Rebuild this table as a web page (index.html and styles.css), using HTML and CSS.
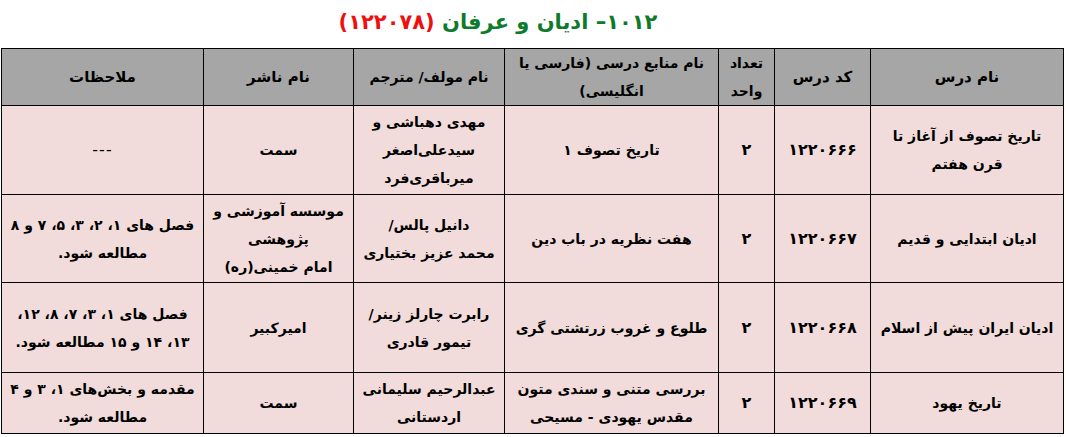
FILE: index.html
```html
<!DOCTYPE html>
<html lang="fa" dir="rtl">
<head>
<meta charset="utf-8">
<link rel="stylesheet" href="styles.css">
</head>
<body>
<h1 class="title"><span class="green">۱۰۱۲– ادیان و عرفان</span> <span class="red">(۱۲۲۰۷۸)</span></h1>
<table class="grid">
  <colgroup>
    <col class="c-name"><col class="c-code"><col class="c-unit"><col class="c-src"><col class="c-auth"><col class="c-pub"><col class="c-note">
  </colgroup>
  <thead>
    <tr>
      <th class="big">نام درس</th>
      <th class="big">کد درس</th>
      <th>تعداد<br>واحد</th>
      <th>نام منابع درسی (فارسی یا<br>انگلیسی)</th>
      <th>نام مولف/ مترجم</th>
      <th class="big">نام ناشر</th>
      <th class="big">ملاحظات</th>
    </tr>
  </thead>
  <tbody>
    <tr class="r1">
      <td>تاریخ تصوف از آغاز تا<br>قرن هفتم</td>
      <td class="num">۱۲۲۰۶۶۶</td>
      <td class="num">۲</td>
      <td>تاریخ تصوف ۱</td>
      <td>مهدی دهباشی و<br>سیدعلی‌اصغر<br>میرباقری‌فرد</td>
      <td>سمت</td>
      <td class="dash">---</td>
    </tr>
    <tr class="r2">
      <td>ادیان ابتدایی و قدیم</td>
      <td class="num">۱۲۲۰۶۶۷</td>
      <td class="num">۲</td>
      <td>هفت نظریه در باب دین</td>
      <td>دانیل پالس/<br>محمد عزیز بختیاری</td>
      <td>موسسه آموزشی و<br>پژوهشی<br>امام خمینی(ره)</td>
      <td>فصل های ۱، ۲، ۳، ۵، ۷ و ۸<br>مطالعه شود.</td>
    </tr>
    <tr class="r3">
      <td>ادیان ایران پیش از اسلام</td>
      <td class="num">۱۲۲۰۶۶۸</td>
      <td class="num">۲</td>
      <td>طلوع و غروب زرتشتی گری</td>
      <td>رابرت چارلز زینر/<br>تیمور قادری</td>
      <td>امیرکبیر</td>
      <td>فصل های ۱، ۳، ۷، ۸، ۱۲،<br>۱۳، ۱۴ و ۱۵ مطالعه شود.</td>
    </tr>
    <tr class="r4">
      <td>تاریخ یهود</td>
      <td class="num">۱۲۲۰۶۶۹</td>
      <td class="num">۲</td>
      <td>بررسی متنی و سندی متون<br>مقدس یهودی - مسیحی</td>
      <td>عبدالرحیم سلیمانی<br>اردستانی</td>
      <td>سمت</td>
      <td>مقدمه و بخش‌های ۱، ۳ و ۴<br>مطالعه شود.</td>
    </tr>
  </tbody>
</table>
</body>
</html>
```
FILE: styles.css
```css
html, body {
  margin: 0;
  padding: 0;
  background: #ffffff;
}
body {
  font-family: "DejaVu Sans", sans-serif;
  color: #000;
}
.title {
  margin: 0;
  height: 48px;
  line-height: 44px;
  padding-right: 70px;
  text-align: center;
  font-size: 21px;
  font-weight: bold;
}
.green { color: #0d7a2c; }
.red { color: #ee0f0f; }
.grid {
  margin-right: 2px;
  width: 1063px;
  border-collapse: collapse;
  table-layout: fixed;
  font-size: 14px;
  font-weight: bold;
}
.c-name { width: 193px; }
.c-code { width: 96px; }
.c-unit { width: 56px; }
.c-src { width: 214px; }
.c-auth { width: 151px; }
.c-pub { width: 150px; }
.c-note { width: 202px; }
.grid th, .grid td {
  border: 1.5px solid #000;
  text-align: center;
  vertical-align: middle;
  line-height: 28px;
  padding: 0 4px;
}
.grid th {
  background: #a6a6a6;
  height: 55px;
}
.grid th.big { font-size: 15px; }
.grid td {
  background: #f2dcdb;
}
.grid td.num { font-size: 16px; }
.r1 td { height: 88px; }
.r2 td { height: 87px; }
.r3 td { height: 89px; }
.r4 td { height: 60px; }
.dash { font-weight: normal; font-size: 16px; letter-spacing: 1px; }
```
